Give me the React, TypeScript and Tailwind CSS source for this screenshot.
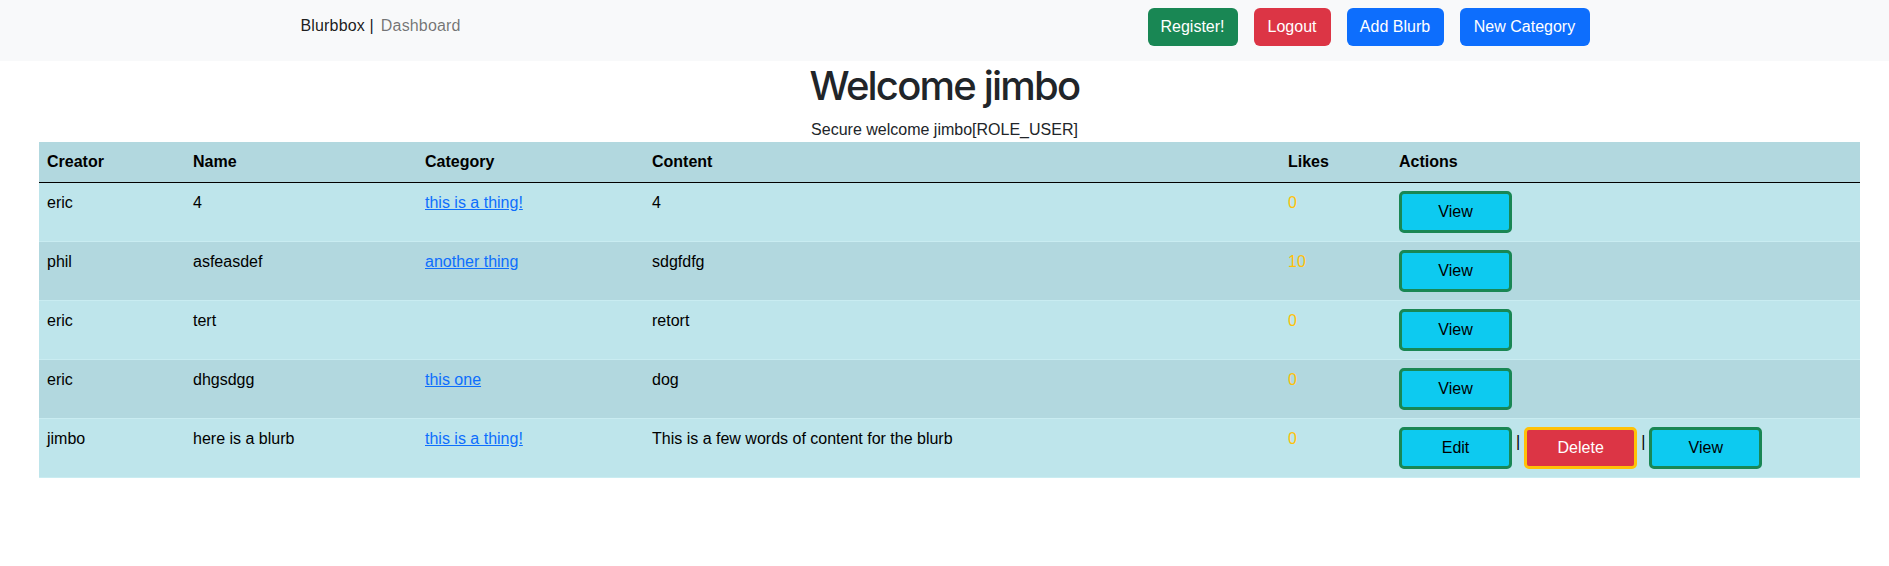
const rows = [
  { creator: "eric", name: "4", category: "this is a thing!", content: "4", likes: 0, own: false },
  { creator: "phil", name: "asfeasdef", category: "another thing", content: "sdgfdfg", likes: 10, own: false },
  { creator: "eric", name: "tert", category: "", content: "retort", likes: 0, own: false },
  { creator: "eric", name: "dhgsdgg", category: "this one", content: "dog", likes: 0, own: false },
  { creator: "jimbo", name: "here is a blurb", category: "this is a thing!", content: "This is a few words of content for the blurb", likes: 0, own: true },
];

const sans = "font-['Liberation_Sans',Arial,sans-serif]";

const ActionButton = ({ label, danger }: { label: string; danger?: boolean }) => (
  <button
    className={
      danger
        ? "w-[113px] h-[42px] rounded-[5px] border-[3px] border-[#ffc107] bg-[#dc3545] text-white text-base leading-6"
        : "w-[113px] h-[42px] rounded-[5px] border-[3px] border-[#198754] bg-[#0dcaf0] text-black text-base leading-6"
    }
  >
    {label}
  </button>
);

export default function App() {
  return (
    <div className={`${sans} min-h-screen bg-white text-[#212529]`}>
      <nav className="bg-[#f8f9fa] h-[61px]">
        <div className="w-[1320px] mx-auto h-full pl-4 pr-[15px] flex items-center justify-between">
          <div className="flex items-center gap-[7px] text-base tracking-[0.01em] mt-[-10px]">
            <span className="text-black/90">Blurbbox |</span>
            <span className="text-black/55">Dashboard</span>
          </div>
          <div className="flex items-center gap-4 mt-[-8px]">
            <button className="w-[90px] h-[38px] rounded-md bg-[#198754] text-white text-base">Register!</button>
            <button className="w-[77px] h-[38px] rounded-md bg-[#dc3545] text-white text-base">Logout</button>
            <button className="w-[97px] h-[38px] rounded-md bg-[#0d6efd] text-white text-base">Add Blurb</button>
            <button className="w-[130px] h-[38px] rounded-md bg-[#0d6efd] text-white text-base">New Category</button>
          </div>
        </div>
      </nav>

      <h1 className="text-center font-['Inter',sans-serif] font-medium text-[40px] leading-[48px] tracking-[-0.045em] mb-2 mt-[1px]">
        Welcome jimbo
      </h1>
      <p className="text-center text-base leading-6">Secure welcome jimbo[ROLE_USER]</p>

      <div className="pl-[39px]">
        <table className="w-[1821px] table-fixed border-collapse text-black text-base leading-6">
          <thead>
            <tr className="bg-[#b2d8df] border-b-[1.5px] border-black">
              <th className="w-[146px] p-2 text-left font-bold">Creator</th>
              <th className="w-[232px] p-2 text-left font-bold">Name</th>
              <th className="w-[227px] p-2 text-left font-bold">Category</th>
              <th className="w-[636px] p-2 text-left font-bold">Content</th>
              <th className="w-[111px] p-2 text-left font-bold">Likes</th>
              <th className="p-2 text-left font-bold">Actions</th>
            </tr>
          </thead>
          <tbody>
            {rows.map((r, i) => (
              <tr key={i} className={`${i % 2 === 0 ? "bg-[#bee5eb]" : "bg-[#b2d8df]"} border-b border-[#c9ecf1]`}>
                <td className="p-2 align-top">{r.creator}</td>
                <td className="p-2 align-top">{r.name}</td>
                <td className="p-2 align-top">
                  {r.category && <a href="#" className="text-[#0d6efd] underline">{r.category}</a>}
                </td>
                <td className="p-2 align-top">{r.content}</td>
                <td className="p-2 align-top text-[#ffc107]">{r.likes}</td>
                <td className="p-2 align-top">
                  {r.own ? (
                    <div className="flex items-start gap-1">
                      <ActionButton label="Edit" />
                      <span className="mt-[3px]">|</span>
                      <ActionButton label="Delete" danger />
                      <span className="mt-[3px]">|</span>
                      <ActionButton label="View" />
                    </div>
                  ) : (
                    <div className="flex">
                      <ActionButton label="View" />
                    </div>
                  )}
                </td>
              </tr>
            ))}
          </tbody>
        </table>
      </div>
    </div>
  );
}
